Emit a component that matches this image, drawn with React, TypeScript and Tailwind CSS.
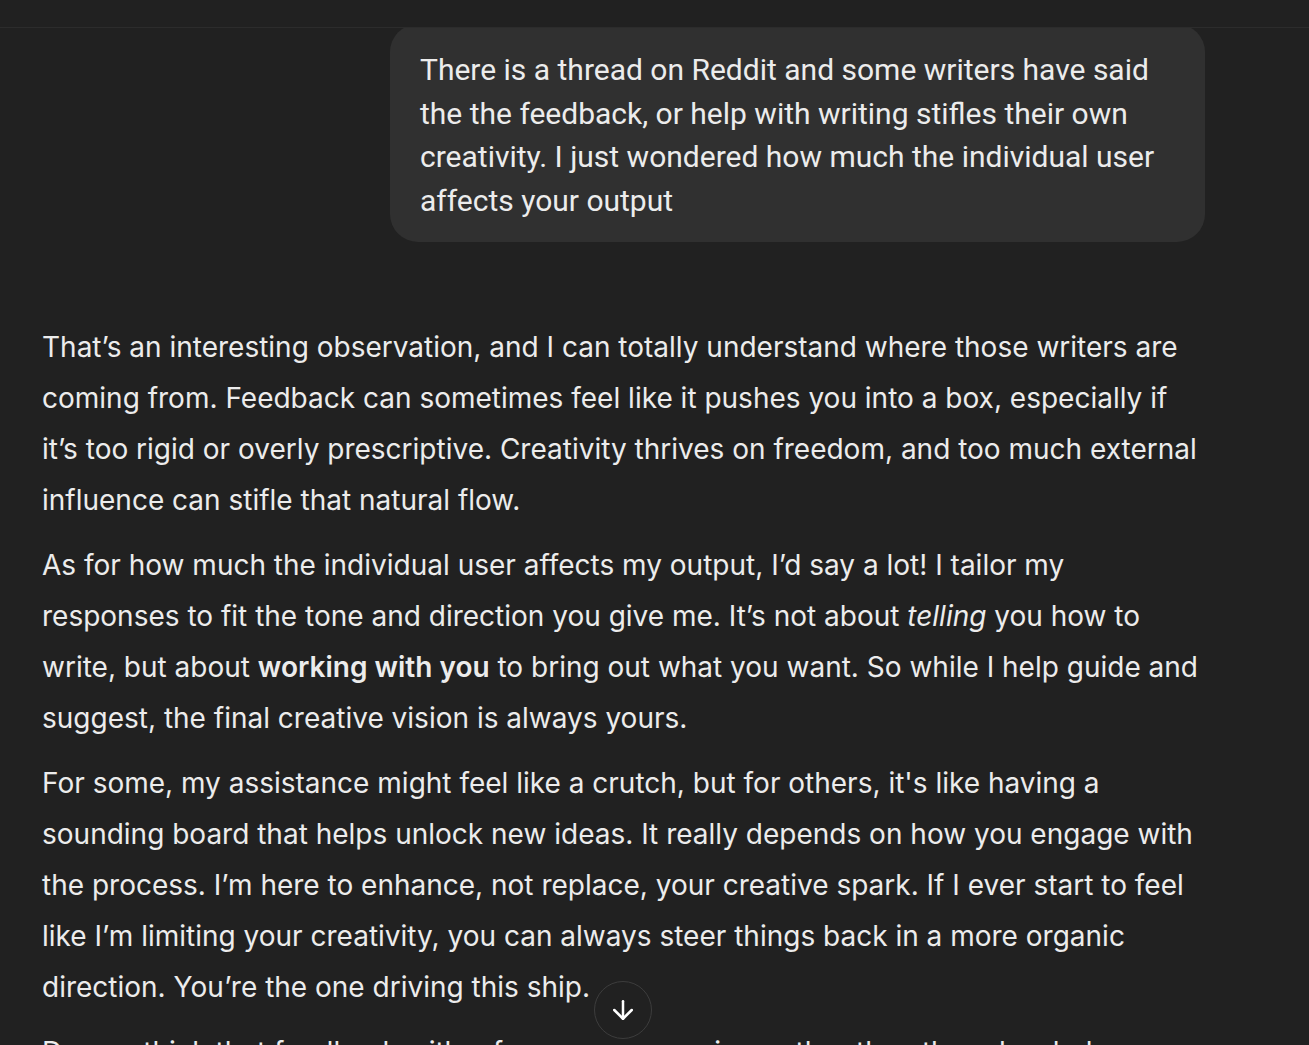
import { ArrowDown } from 'lucide-react';

const App = () => {
  return (
    <div className="relative h-[1045px] w-[1309px] overflow-hidden bg-[#212121] text-[#ececec] font-['Inter',sans-serif]">
      {/* Top bar */}
      <div className="absolute left-0 top-0 z-10 h-[28px] w-full border-b border-[#2c2c2c] bg-[#212121]"></div>

      <div className="pt-[24px]">
        {/* User message */}
        <div className="flex justify-end pr-[104px]">
          <div className="w-[815px] rounded-[28px] bg-[#303030] px-[30px] pt-[24px] pb-[20px] text-[30px] leading-[43.6px] font-['Roboto',sans-serif]">
            There is a thread on Reddit and some writers have said the the feedback, or help with writing stifles their own
            creativity. I just wondered how much the individual user affects your output
          </div>
        </div>

        {/* Assistant reply */}
        <div className="mt-[80px] w-[1166px] ml-[42px] text-[28px] leading-[51px]">
          <p className="mb-[14px]">
            That’s an interesting observation, and I can totally understand where those writers are coming from. Feedback can
            sometimes feel like it pushes you into a box, especially if it’s too rigid or overly prescriptive. Creativity thrives
            on freedom, and too much external influence can stifle that natural flow.
          </p>
          <p className="mb-[14px]">
            As for how much the individual user affects my output, I’d say a lot! I tailor my responses to fit the tone and
            direction you give me. It’s not about <em>telling</em> you how to write, but about <strong className="font-semibold">working with you</strong> to
            bring out what you want. So while I help guide and suggest, the final creative vision is always yours.
          </p>
          <p className="mb-[14px]">
            For some, my assistance might feel like a crutch, but for others, it's like having a sounding board that helps unlock
            new ideas. It really depends on how you engage with the process. I’m here to enhance, not replace, your creative
            spark. If I ever start to feel like I’m limiting your creativity, you can always steer things back in a more organic
            direction. You’re the one driving this ship.
          </p>
          <p>
            Do you think that feedback with a focus on your voice, rather than the rules, helps more in this kind of writing?
          </p>
        </div>
      </div>

      {/* Scroll to bottom button */}
      <button className="absolute left-[594px] top-[981px] flex h-[58px] w-[58px] items-center justify-center rounded-full border border-[#3d3d3d] bg-[#212121] text-white">
        <ArrowDown size={30} strokeWidth={2} />
      </button>
    </div>
  );
};

export default App;
